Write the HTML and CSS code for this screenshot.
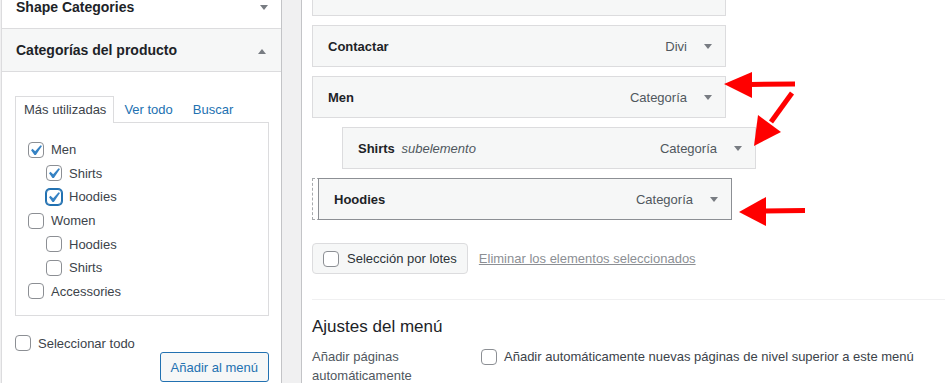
FILE: index.html
```html
<!DOCTYPE html>
<html lang="es">

<head>
    <meta charset="utf-8">
    <title>Menús</title>
    <link rel="stylesheet" href="styles.css">
</head>

<body>
    <div class="screen">
        <aside class="side">
            <div class="box-head cut">
                <h3>Shape Categories</h3>
                <span class="toggle down"></span>
            </div>
            <div class="box-head open">
                <h3>Categorías del producto</h3>
                <span class="toggle up"></span>
            </div>
            <div class="box-body">
                <ul class="tabs">
                    <li class="active">Más utilizadas</li>
                    <li>Ver todo</li>
                    <li>Buscar</li>
                </ul>
                <div class="tab-panel">
                    <ul class="cat-list">
                        <li><span class="cb"><svg viewBox="0 0 20 20"><path d="M14.83 4.89l1.34.94-5.81 8.38H9.02L5.78 9.67l1.34-1.25 2.57 2.4z"/></svg></span>Men</li>
                        <li class="sub"><span class="cb"><svg viewBox="0 0 20 20"><path d="M14.83 4.89l1.34.94-5.81 8.38H9.02L5.78 9.67l1.34-1.25 2.57 2.4z"/></svg></span>Shirts</li>
                        <li class="sub"><span class="cb focus"><svg viewBox="0 0 20 20"><path d="M14.83 4.89l1.34.94-5.81 8.38H9.02L5.78 9.67l1.34-1.25 2.57 2.4z"/></svg></span>Hoodies</li>
                        <li><span class="cb"></span>Women</li>
                        <li class="sub"><span class="cb"></span>Hoodies</li>
                        <li class="sub"><span class="cb"></span>Shirts</li>
                        <li><span class="cb"></span>Accessories</li>
                    </ul>
                </div>
                <div class="select-all"><span class="cb"></span>Seleccionar todo</div>
                <div class="add-row">
                    <button class="btn-add">Añadir al menú</button>
                </div>
            </div>
        </aside>

        <div class="gutter"></div>

        <main class="menu-edit">
            <!-- item scrolled out above the fold -->
            <div class="menu-item"></div>
            <div class="menu-item">
                <span class="item-title">Contactar</span>
                <span class="item-type">Divi</span>
                <span class="tri"></span>
            </div>
            <div class="menu-item">
                <span class="item-title">Men</span>
                <span class="item-type">Categoría</span>
                <span class="tri"></span>
            </div>
            <div class="menu-item depth-1">
                <span class="item-title">Shirts <em class="item-sub">subelemento</em></span>
                <span class="item-type">Categoría</span>
                <span class="tri"></span>
            </div>
            <div class="drag-slot">
                <div class="menu-item dragging">
                    <span class="item-title">Hoodies</span>
                    <span class="item-type">Categoría</span>
                    <span class="tri"></span>
                </div>
            </div>

            <div class="bulk-row">
                <div class="bulk-btn"><span class="cb"></span>Selección por lotes</div>
                <span class="bulk-link">Eliminar los elementos seleccionados</span>
            </div>

            <div class="settings">
                <h3>Ajustes del menú</h3>
                <div class="settings-row">
                    <div class="settings-label">Añadir páginas automáticamente</div>
                    <div class="auto-add"><span class="cb"></span>Añadir automáticamente nuevas páginas de nivel superior a este menú</div>
                </div>
            </div>
        </main>

        <!-- annotation arrows drawn over the screenshot -->
        <svg class="arrows" width="945" height="383" viewBox="0 0 945 383">
            <line x1="750" y1="84.5" x2="795" y2="84" />
            <polygon points="724,84 752,72 752,98" />
            <line x1="792" y1="93" x2="771" y2="122" />
            <polygon points="754,146 758,115 781,132" />
            <line x1="764" y1="211" x2="805" y2="210.5" />
            <polygon points="739,212 766,197 766,226" />
        </svg>
    </div>
</body>

</html>
```

FILE: styles.css
```css
body {
    margin: 0;
    background: #f0f0f1;
    font-family: "Liberation Sans", Arial, sans-serif;
    font-size: 13px;
    color: #3c434a;
    overflow: hidden;
}

.screen {
    position: relative;
    display: flex;
    height: 383px;
    overflow: hidden;
}

/* left column */

.side {
    width: 281px;
    margin-left: 1px;
    box-sizing: border-box;
    flex-shrink: 0;
    background: #fff;
    border-left: 1px solid #dcdcde;
    border-right: 1px solid #c3c4c7;
}

.gutter {
    width: 19px;
    flex-shrink: 0;
}

.box-head {
    display: flex;
    justify-content: space-between;
    align-items: center;
    padding: 0 13px 0 14px;
    border-bottom: 1px solid #dcdcde;
}

.box-head h3 {
    margin: 0;
    font-size: 14px;
    font-weight: bold;
    color: #1d2327;
}

.box-head.cut {
    height: 28px;
    align-items: flex-start;
}

.box-head.cut h3 {
    line-height: 14px;
}

.box-head.open {
    height: 42px;
    background: #f6f7f7;
    padding-right: 15px;
}

.toggle {
    width: 0;
    height: 0;
    border-left: 4px solid transparent;
    border-right: 4px solid transparent;
}

.toggle.down {
    margin-top: 5px;
    border-top: 5px solid #787c82;
}

.toggle.up {
    margin-top: 2px;
    border-bottom: 5px solid #787c82;
}

.box-body {
    padding: 24px 12px 0 13px;
}

.tabs {
    display: flex;
    list-style: none;
    margin: 0;
    padding: 0;
}

.tabs li {
    padding: 0 9px;
    line-height: 25px;
    border: 1px solid transparent;
    border-bottom: 0;
    color: #2271b1;
}

.tabs li.active {
    position: relative;
    margin-bottom: -1px;
    padding: 0 7px 0 8px;
    background: #fff;
    border-color: #dcdcde;
    color: #3c434a;
}

.tab-panel {
    height: 194px;
    box-sizing: border-box;
    padding: 15px 12px 0;
    border: 1px solid #dcdcde;
}

.cat-list {
    list-style: none;
    margin: 0;
    padding: 0;
}

.cat-list li {
    height: 23.6px;
    display: flex;
    align-items: center;
    gap: 7px;
    color: #3c434a;
}

.cat-list li.sub {
    padding-left: 18px;
}

.cb {
    position: relative;
    width: 16px;
    height: 16px;
    box-sizing: border-box;
    flex-shrink: 0;
    background: #fff;
    border: 1px solid #8c8f94;
    border-radius: 4px;
}

.cb svg {
    position: absolute;
    left: -4px;
    top: -3px;
    width: 21px;
    height: 21px;
    fill: #3582c4;
}

.cb.focus {
    border-color: #2271b1;
    box-shadow: 0 0 0 1px #2271b1;
}

.select-all {
    display: flex;
    align-items: center;
    gap: 7px;
    margin-top: 19px;
}

.add-row {
    display: flex;
    justify-content: flex-end;
    margin-top: 1px;
}

.btn-add {
    height: 30px;
    padding: 0 10px;
    font-family: inherit;
    font-size: 13px;
    color: #2271b1;
    background: #f6f7f7;
    border: 1px solid #2271b1;
    border-radius: 3px;
}

/* menu structure */

.menu-edit {
    flex: 1;
    background: #fff;
    border-left: 1px solid #c3c4c7;
    padding-left: 10px;
}

.menu-item {
    width: 414px;
    height: 42px;
    box-sizing: border-box;
    display: flex;
    align-items: center;
    padding: 0 13px 0 15px;
    margin-bottom: 9px;
    background: #f6f7f7;
    border: 1px solid #dcdcde;
}

.menu-item:first-child {
    margin-top: -26px;
}

.menu-item.depth-1 {
    margin-left: 30px;
}

.item-title {
    flex: 1;
    font-weight: bold;
    color: #1d2327;
}

.item-sub {
    margin-left: 3px;
    font-weight: normal;
    color: #50575e;
}

.item-type {
    margin-right: 17px;
    color: #50575e;
}

.tri {
    width: 0;
    height: 0;
    border-left: 4px solid transparent;
    border-right: 4px solid transparent;
    border-top: 5px solid #787c82;
}

.drag-slot {
    position: relative;
    width: 414px;
    height: 42px;
    box-sizing: border-box;
    border: 1px dashed #a7aaad;
}

.drag-slot .dragging {
    position: absolute;
    left: 5px;
    top: -1px;
    margin: 0;
    border-color: #8c8f94;
}

.bulk-row {
    display: flex;
    align-items: center;
    gap: 11px;
    margin-top: 23px;
}

.bulk-btn {
    height: 31px;
    box-sizing: border-box;
    display: flex;
    align-items: center;
    gap: 8px;
    padding: 0 10px;
    color: #2c3338;
    background: #f6f7f7;
    border: 1px solid #dcdcde;
    border-radius: 4px;
}

.bulk-link {
    color: #8c8f94;
    text-decoration: underline;
}

.settings {
    margin-top: 25px;
    border-top: 1px solid #f0f0f1;
}

.settings h3 {
    margin: 0;
    padding-top: 17px;
    font-size: 17px;
    line-height: 20px;
    font-weight: normal;
    color: #1d2327;
}

.settings-row {
    display: flex;
    margin-top: 10px;
}

.settings-label {
    width: 169px;
    line-height: 19px;
    color: #50575e;
}

.auto-add {
    display: flex;
    align-items: center;
    gap: 7px;
    height: 19px;
    color: #3c434a;
}

.arrows {
    position: absolute;
    top: 0;
    left: 0;
    pointer-events: none;
}

.arrows line {
    stroke: #ff0000;
    stroke-width: 5;
}

.arrows polygon {
    fill: #ff0000;
}
```
